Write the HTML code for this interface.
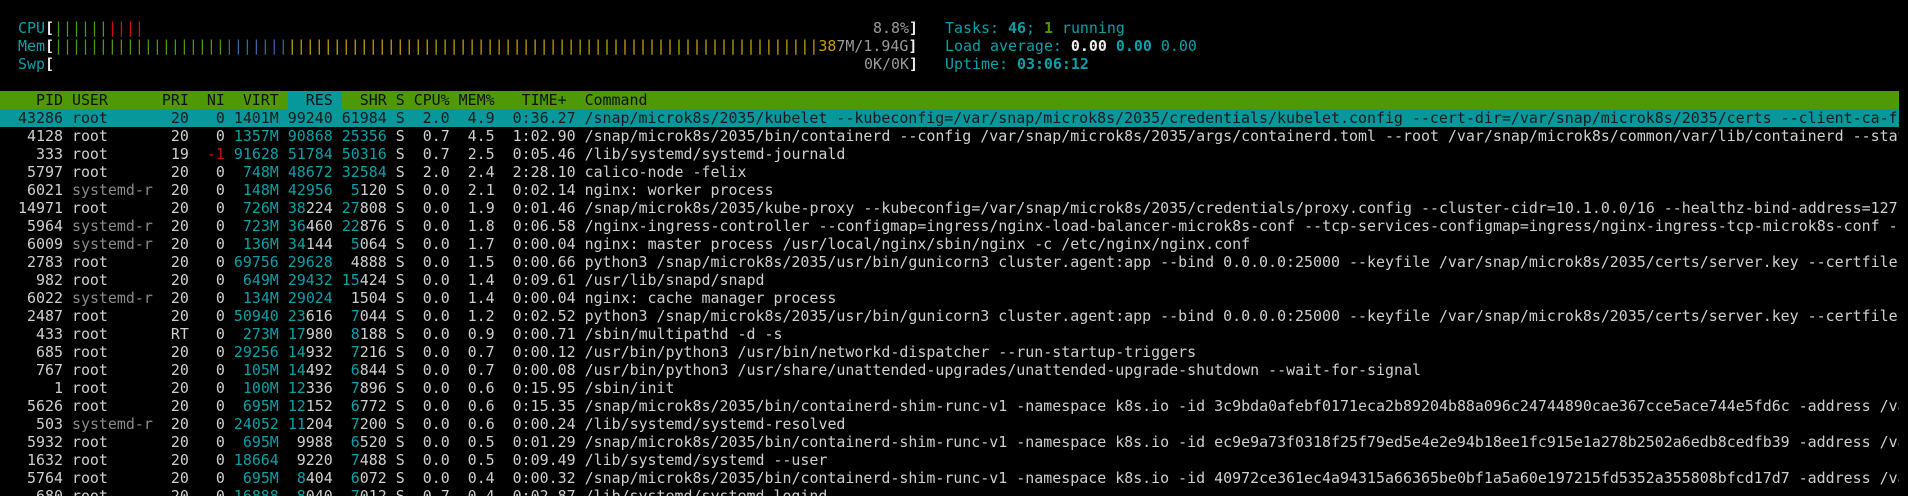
<!DOCTYPE html>
<html><head><meta charset="utf-8"><style>
html,body{margin:0;padding:0;background:#000;width:1908px;height:496px;overflow:hidden}
#s{position:absolute;left:0;top:1px;width:1899px;height:495px;overflow:hidden;font-family:"DejaVu Sans Mono","Liberation Mono",monospace;font-size:14.95px;line-height:18px;color:#cfcfcf}
.l{position:absolute;left:0;height:18px;white-space:pre;width:1899px;overflow:hidden}
.a{position:absolute;top:0;white-space:pre}
.c{color:#0aa0a8}.cb{color:#0aa0a8;font-weight:bold}.g{color:#4e9a06}.gb{color:#4e9a06;font-weight:bold}
.r{color:#cc1010}.b{color:#3465a4}.y{color:#c4a000}.w{color:#eeeeec;font-weight:bold}.d{color:#999}.u{color:#8a8a8a}
.hd{background:#4e9a06;color:#111}.hs{background:#06989a}
.sel{background:#06989a;color:#1a1a1a}
</style></head><body><div id="s">
<div class="l" style="top:18px"><span class="c">  CPU</span><span class="w">[</span><span class="g">||||||</span><span class="r">||||</span><span class="a d" style="left:873px">8.8%</span><span class="a w" style="left:909px">]</span><span class="a" style="left:945px"><span class="c">Tasks: </span><span class="cb">46</span><span class="c">; </span><span class="gb">1</span><span class="c"> running</span></span></div>
<div class="l" style="top:36px"><span class="c">  Mem</span><span class="w">[</span><span class="g">|||||||||||||||||||</span><span class="b">|||||||</span><span class="y">|||||||||||||||||||||||||||||||||||||||||||||||||||||||||||38</span><span class="d">7M/1.94G</span><span class="w">]</span><span class="a" style="left:945px"><span class="c">Load average: </span><span class="w">0.00 </span><span class="cb">0.00 </span><span class="c">0.00</span></span></div>
<div class="l" style="top:54px"><span class="c">  Swp</span><span class="w">[</span><span class="a d" style="left:864px">0K/0K</span><span class="a w" style="left:909px">]</span><span class="a" style="left:945px"><span class="c">Uptime: </span><span class="cb">03:06:12</span></span></div>
<div class="l hd" style="top:90px">    PID USER      PRI  NI  VIRT <span class="hs">  RES </span>  SHR S CPU% MEM%   TIME+  Command</div>
<div class="l sel" style="top:108px">  43286 root       20   0 1401M 99240 61984 S  2.0  4.9  0:36.27 /snap/microk8s/2035/kubelet --kubeconfig=/var/snap/microk8s/2035/credentials/kubelet.config --cert-dir=/var/snap/microk8s/2035/certs --client-ca-file</div>
<div class="l" style="top:126px">   4128 root       20   0 <span class="c">1357M</span> <span class="c">90868</span> <span class="c">25356</span> S  0.7  4.5  1:02.90 /snap/microk8s/2035/bin/containerd --config /var/snap/microk8s/2035/args/containerd.toml --root /var/snap/microk8s/common/var/lib/containerd --state</div>
<div class="l" style="top:144px">    333 root       19  <span class="r">-1</span> <span class="c">91628</span> <span class="c">51784</span> <span class="c">50316</span> S  0.7  2.5  0:05.46 /lib/systemd/systemd-journald</div>
<div class="l" style="top:162px">   5797 root       20   0  <span class="c">748M</span> <span class="c">48672</span> <span class="c">32584</span> S  2.0  2.4  2:28.10 calico-node -felix</div>
<div class="l" style="top:180px">   6021 <span class="u">systemd-r</span>  20   0  <span class="c">148M</span> <span class="c">42956</span>  <span class="c">5</span>120 S  0.0  2.1  0:02.14 nginx: worker process</div>
<div class="l" style="top:198px">  14971 root       20   0  <span class="c">726M</span> <span class="c">38</span>224 <span class="c">27</span>808 S  0.0  1.9  0:01.46 /snap/microk8s/2035/kube-proxy --kubeconfig=/var/snap/microk8s/2035/credentials/proxy.config --cluster-cidr=10.1.0.0/16 --healthz-bind-address=127.0</div>
<div class="l" style="top:216px">   5964 <span class="u">systemd-r</span>  20   0  <span class="c">723M</span> <span class="c">36</span>460 <span class="c">22</span>876 S  0.0  1.8  0:06.58 /nginx-ingress-controller --configmap=ingress/nginx-load-balancer-microk8s-conf --tcp-services-configmap=ingress/nginx-ingress-tcp-microk8s-conf --</div>
<div class="l" style="top:234px">   6009 <span class="u">systemd-r</span>  20   0  <span class="c">136M</span> <span class="c">34</span>144  <span class="c">5</span>064 S  0.0  1.7  0:00.04 nginx: master process /usr/local/nginx/sbin/nginx -c /etc/nginx/nginx.conf</div>
<div class="l" style="top:252px">   2783 root       20   0 <span class="c">69756</span> <span class="c">29628</span>  4888 S  0.0  1.5  0:00.66 python3 /snap/microk8s/2035/usr/bin/gunicorn3 cluster.agent:app --bind 0.0.0.0:25000 --keyfile /var/snap/microk8s/2035/certs/server.key --certfile</div>
<div class="l" style="top:270px">    982 root       20   0  <span class="c">649M</span> <span class="c">29432</span> <span class="c">15</span>424 S  0.0  1.4  0:09.61 /usr/lib/snapd/snapd</div>
<div class="l" style="top:288px">   6022 <span class="u">systemd-r</span>  20   0  <span class="c">134M</span> <span class="c">29024</span>  1504 S  0.0  1.4  0:00.04 nginx: cache manager process</div>
<div class="l" style="top:306px">   2487 root       20   0 <span class="c">50940</span> <span class="c">23</span>616  <span class="c">7</span>044 S  0.0  1.2  0:02.52 python3 /snap/microk8s/2035/usr/bin/gunicorn3 cluster.agent:app --bind 0.0.0.0:25000 --keyfile /var/snap/microk8s/2035/certs/server.key --certfile</div>
<div class="l" style="top:324px">    433 root       RT   0  <span class="c">273M</span> <span class="c">17</span>980  <span class="c">8</span>188 S  0.0  0.9  0:00.71 /sbin/multipathd -d -s</div>
<div class="l" style="top:342px">    685 root       20   0 <span class="c">29256</span> <span class="c">14</span>932  <span class="c">7</span>216 S  0.0  0.7  0:00.12 /usr/bin/python3 /usr/bin/networkd-dispatcher --run-startup-triggers</div>
<div class="l" style="top:360px">    767 root       20   0  <span class="c">105M</span> <span class="c">14</span>492  <span class="c">6</span>844 S  0.0  0.7  0:00.08 /usr/bin/python3 /usr/share/unattended-upgrades/unattended-upgrade-shutdown --wait-for-signal</div>
<div class="l" style="top:378px">      1 root       20   0  <span class="c">100M</span> <span class="c">12</span>336  <span class="c">7</span>896 S  0.0  0.6  0:15.95 /sbin/init</div>
<div class="l" style="top:396px">   5626 root       20   0  <span class="c">695M</span> <span class="c">12</span>152  <span class="c">6</span>772 S  0.0  0.6  0:15.35 /snap/microk8s/2035/bin/containerd-shim-runc-v1 -namespace k8s.io -id 3c9bda0afebf0171eca2b89204b88a096c24744890cae367cce5ace744e5fd6c -address /var</div>
<div class="l" style="top:414px">    503 <span class="u">systemd-r</span>  20   0 <span class="c">24052</span> <span class="c">11</span>204  <span class="c">7</span>200 S  0.0  0.6  0:00.24 /lib/systemd/systemd-resolved</div>
<div class="l" style="top:432px">   5932 root       20   0  <span class="c">695M</span>  9988  <span class="c">6</span>520 S  0.0  0.5  0:01.29 /snap/microk8s/2035/bin/containerd-shim-runc-v1 -namespace k8s.io -id ec9e9a73f0318f25f79ed5e4e2e94b18ee1fc915e1a278b2502a6edb8cedfb39 -address /var</div>
<div class="l" style="top:450px">   1632 root       20   0 <span class="c">18664</span>  9220  <span class="c">7</span>488 S  0.0  0.5  0:09.49 /lib/systemd/systemd --user</div>
<div class="l" style="top:468px">   5764 root       20   0  <span class="c">695M</span>  <span class="c">8</span>404  <span class="c">6</span>072 S  0.0  0.4  0:00.32 /snap/microk8s/2035/bin/containerd-shim-runc-v1 -namespace k8s.io -id 40972ce361ec4a94315a66365be0bf1a5a60e197215fd5352a355808bfcd17d7 -address /var</div>
<div class="l" style="top:486px">    680 root       20   0 <span class="c">16888</span>  <span class="c">8</span>040  <span class="c">7</span>012 S  0.7  0.4  0:02.87 /lib/systemd/systemd-logind</div>
</div></body></html>
